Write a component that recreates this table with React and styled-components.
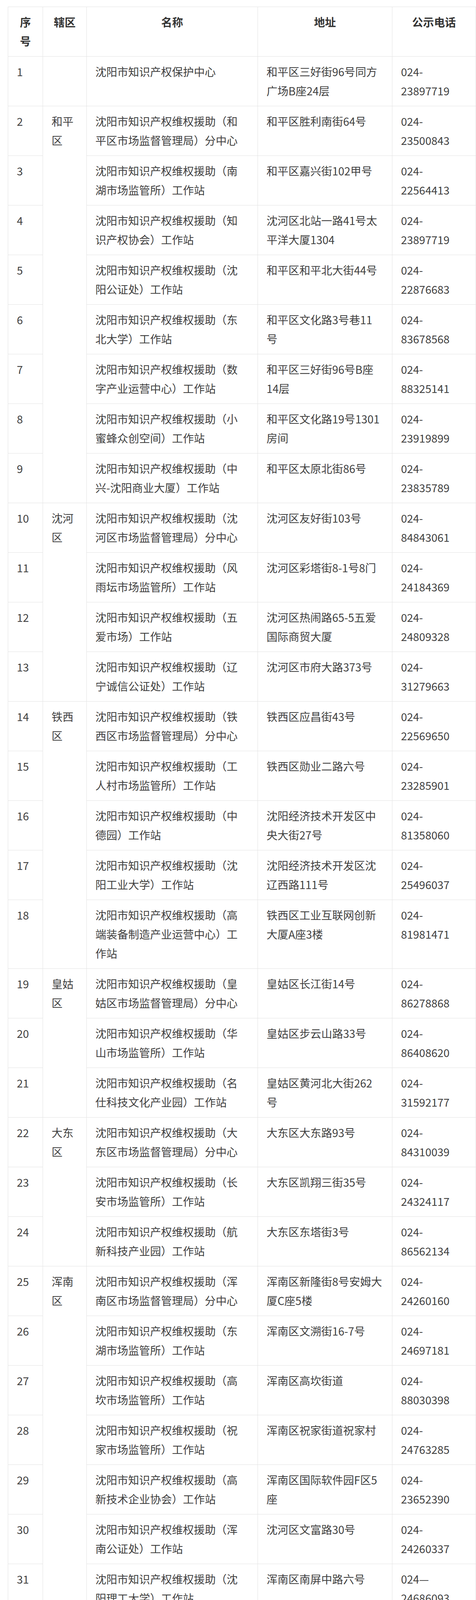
import React from "react";
import styled, { createGlobalStyle } from "styled-components";

const GlobalStyle = createGlobalStyle`
  body {
    margin: 0;
    background: #fff;
    font-family: "Noto Sans CJK SC", "Noto Sans", sans-serif;
  }
`;

const Page = styled.div`
  padding: 17px 0 0 20px;
`;

const Table = styled.table`
  width: 1197px;
  table-layout: fixed;
  border-collapse: collapse;
  font-size: 28px;
  line-height: 49px;
`;

const HeadCell = styled.th`
  border: 1px solid #e3e3e3;
  padding: 14px 22px;
  vertical-align: top;
  text-align: center;
  font-weight: bold;
  color: #333;
  white-space: pre;
`;

const Cell = styled.td`
  border: 1px solid #e3e3e3;
  padding: 14px 22px;
  vertical-align: top;
  text-align: left;
  color: #3f3f3f;
  white-space: pre;
`;

const N = "沈阳市知识产权维权援助（";

// each group: district name (with its line break) and its stations
const groups = [
  {
    area: "",
    rows: [["1", "沈阳市知识产权保护中心", "和平区三好街96号同方\n广场B座24层", "024-\n23897719"]],
  },
  {
    area: "和平\n区",
    rows: [
      ["2", N + "和\n平区市场监督管理局）分中心", "和平区胜利南街64号", "024-\n23500843"],
      ["3", N + "南\n湖市场监管所）工作站", "和平区嘉兴街102甲号", "024-\n22564413"],
      ["4", N + "知\n识产权协会）工作站", "沈河区北站一路41号太\n平洋大厦1304", "024-\n23897719"],
      ["5", N + "沈\n阳公证处）工作站", "和平区和平北大街44号", "024-\n22876683"],
      ["6", N + "东\n北大学）工作站", "和平区文化路3号巷11\n号", "024-\n83678568"],
      ["7", N + "数\n字产业运营中心）工作站", "和平区三好街96号B座\n14层", "024-\n88325141"],
      ["8", N + "小\n蜜蜂众创空间）工作站", "和平区文化路19号1301\n房间", "024-\n23919899"],
      ["9", N + "中\n兴-沈阳商业大厦）工作站", "和平区太原北街86号", "024-\n23835789"],
    ],
  },
  {
    area: "沈河\n区",
    rows: [
      ["10", N + "沈\n河区市场监督管理局）分中心", "沈河区友好街103号", "024-\n84843061"],
      ["11", N + "风\n雨坛市场监管所）工作站", "沈河区彩塔街8-1号8门", "024-\n24184369"],
      ["12", N + "五\n爱市场）工作站", "沈河区热闹路65-5五爱\n国际商贸大厦", "024-\n24809328"],
      ["13", N + "辽\n宁诚信公证处）工作站", "沈河区市府大路373号", "024-\n31279663"],
    ],
  },
  {
    area: "铁西\n区",
    rows: [
      ["14", N + "铁\n西区市场监督管理局）分中心", "铁西区应昌街43号", "024-\n22569650"],
      ["15", N + "工\n人村市场监管所）工作站", "铁西区勋业二路六号", "024-\n23285901"],
      ["16", N + "中\n德园）工作站", "沈阳经济技术开发区中\n央大街27号", "024-\n81358060"],
      ["17", N + "沈\n阳工业大学）工作站", "沈阳经济技术开发区沈\n辽西路111号", "024-\n25496037"],
      ["18", N + "高\n端装备制造产业运营中心）工\n作站", "铁西区工业互联网创新\n大厦A座3楼", "024-\n81981471"],
    ],
  },
  {
    area: "皇姑\n区",
    rows: [
      ["19", N + "皇\n姑区市场监督管理局）分中心", "皇姑区长江街14号", "024-\n86278868"],
      ["20", N + "华\n山市场监管所）工作站", "皇姑区步云山路33号", "024-\n86408620"],
      ["21", N + "名\n仕科技文化产业园）工作站", "皇姑区黄河北大街262\n号", "024-\n31592177"],
    ],
  },
  {
    area: "大东\n区",
    rows: [
      ["22", N + "大\n东区市场监督管理局）分中心", "大东区大东路93号", "024-\n84310039"],
      ["23", N + "长\n安市场监管所）工作站", "大东区凯翔三街35号", "024-\n24324117"],
      ["24", N + "航\n新科技产业园）工作站", "大东区东塔街3号", "024-\n86562134"],
    ],
  },
  {
    area: "浑南\n区",
    rows: [
      ["25", N + "浑\n南区市场监督管理局）分中心", "浑南区新隆街8号安姆大\n厦C座5楼", "024-\n24260160"],
      ["26", N + "东\n湖市场监管所）工作站", "浑南区文溯街16-7号", "024-\n24697181"],
      ["27", N + "高\n坎市场监管所）工作站", "浑南区高坎街道", "024-\n88030398"],
      ["28", N + "祝\n家市场监管所）工作站", "浑南区祝家街道祝家村", "024-\n24763285"],
      ["29", N + "高\n新技术企业协会）工作站", "浑南区国际软件园F区5\n座", "024-\n23652390"],
      ["30", N + "浑\n南公证处）工作站", "沈河区文富路30号", "024-\n24260337"],
      ["31", N + "沈\n阳理工大学）工作站", "浑南区南屏中路六号", "024—\n24686093"],
      ["32", N + "东\n北科技大市场）工作站", "浑南区上深沟村861-3\n号(201),E03-211", "024-\n23652375\n-2006"],
      ["33", N + "盛\n京大奥莱）工作站", "浑南新区营盘北街5号", "024-\n31561111"],
      ["34", N + "新\n园高联产业园）工作站", "浑南新区文溯街16号", "024-\n24699116"],
      ["35", N + "沈\n阳知识产权运营服务平台）工\n作站", "浑南区上深沟村868-12\n号（501）", "024-\n67850770"],
      ["36", N + "国\n际软件园）工作站", "浑南区上深沟村860-1\n号D09-615房间", "024-\n83780556"],
    ],
  },
  {
    area: "于洪\n区",
    rows: [
      ["37", N + "于\n洪区市场监督管理局）分中心", "于洪区迎宾路29号", "024-\n25322558"],
      ["38", N + "东\n北机动车配件市场）工作站", "于洪区昆山西路238号", "024-\n85051555"],
      ["39", N + "造\n化大集）工作站", "于洪区沈北西路80号", "024-\n86586777"],
    ],
  },
  {
    area: "沈北\n新区",
    rows: [
      ["40", N + "沈\n北新区市场监督管理局）分中\n心", "沈北新区辉山大街123\n号", "024-\n81619866"],
      ["41", N + "正\n良市场监管所）工作站", "沈北新区沈北路56-1号", "024-\n89875503"],
    ],
  },
  {
    area: "苏家\n屯区",
    rows: [
      ["42", N + "苏\n家屯区市场监督管理局）分中\n心", "苏家屯区枫杨路121号", "024-\n89810362"],
      ["43", N + "林\n盛市场监管所）工作站", "苏家屯区清州街86-1号", "024-\n89488098"],
    ],
  },
  {
    area: "辽中\n区",
    rows: [
      ["44", N + "辽\n中区市场监督管理局）分中心", "辽中区迎宾路22号", "024-\n87820101"],
      ["45", N + "中\n俄经贸合作产业园）工作站", "沈阳近海经济区中央路3\n甲号", "024-\n87906000"],
    ],
  },
  {
    area: "新民\n市",
    rows: [
      ["46", N + "新\n民市市场监督管理局）分中心", "新民市南郊路20号", "024-\n27513096"],
      ["47", N + "胡\n台市场监管所）工作站", "新民市胡台镇振兴十街", "024-\n27513074"],
    ],
  },
  {
    area: "法库\n县",
    rows: [["48", N + "法\n库县市场监督管理局）分中心", "法库县吉祥街道晓东街7\n号", "024-\n87128020"]],
  },
  {
    area: "康平\n县",
    rows: [
      ["49", N + "康\n平县市场监督管理局）分中心", "康平县新城区顺山一路", "024-\n67996733"],
      ["50", N + "康\n平寒富苹果协会）工作站", "康平县方家屯镇东小房\n身村", "024-\n67996733"],
      ["51", N + "康\n平塑编协会）工作站", "康平经济开发区朝阳工\n业园", "024-\n31180018"],
      ["52", N + "康\n平杂粮发展协会）工作站", "康平县康平镇中心街\n258号", "024-\n87335551"],
      ["53", N + "康\n平粮食发展行业协会）工作站", "康平县北四家子乡三合\n堡村", "024-\n27302877"],
    ],
  },
  {
    area: "自贸\n区",
    rows: [
      ["54", N + "辽\n宁自贸试验区沈阳片区）分中\n心", "浑南区创新二路39-1号", "024-\n83777430"],
      ["55", N + "锦\n联生态科技园）工作站", "浑南区创新路155-3号", "024-\n83760768"],
      ["56", N + "燃\n气轮机专业化发展平台）工作\n站", "浑南区银卡东路信安达\n大厦B座", "024-\n66117777\n-1802"],
    ],
  },
];

export default function App() {
  return (
    <>
      <GlobalStyle />
      <Page>
        <Table>
          <colgroup>
            <col style={{ width: 89 }} />
            <col style={{ width: 112 }} />
            <col style={{ width: 438 }} />
            <col style={{ width: 344 }} />
            <col style={{ width: 214 }} />
          </colgroup>
          <thead>
            <tr>
              <HeadCell>{"序\n号"}</HeadCell>
              <HeadCell>辖区</HeadCell>
              <HeadCell>名称</HeadCell>
              <HeadCell>地址</HeadCell>
              <HeadCell>公示电话</HeadCell>
            </tr>
          </thead>
          <tbody>
            {groups.map((g) =>
              g.rows.map(([no, name, addr, tel], i) => (
                <tr key={no}>
                  <Cell>{no}</Cell>
                  {i === 0 && <Cell rowSpan={g.rows.length}>{g.area}</Cell>}
                  <Cell>{name}</Cell>
                  <Cell>{addr}</Cell>
                  <Cell>{tel}</Cell>
                </tr>
              ))
            )}
          </tbody>
        </Table>
      </Page>
    </>
  );
}
